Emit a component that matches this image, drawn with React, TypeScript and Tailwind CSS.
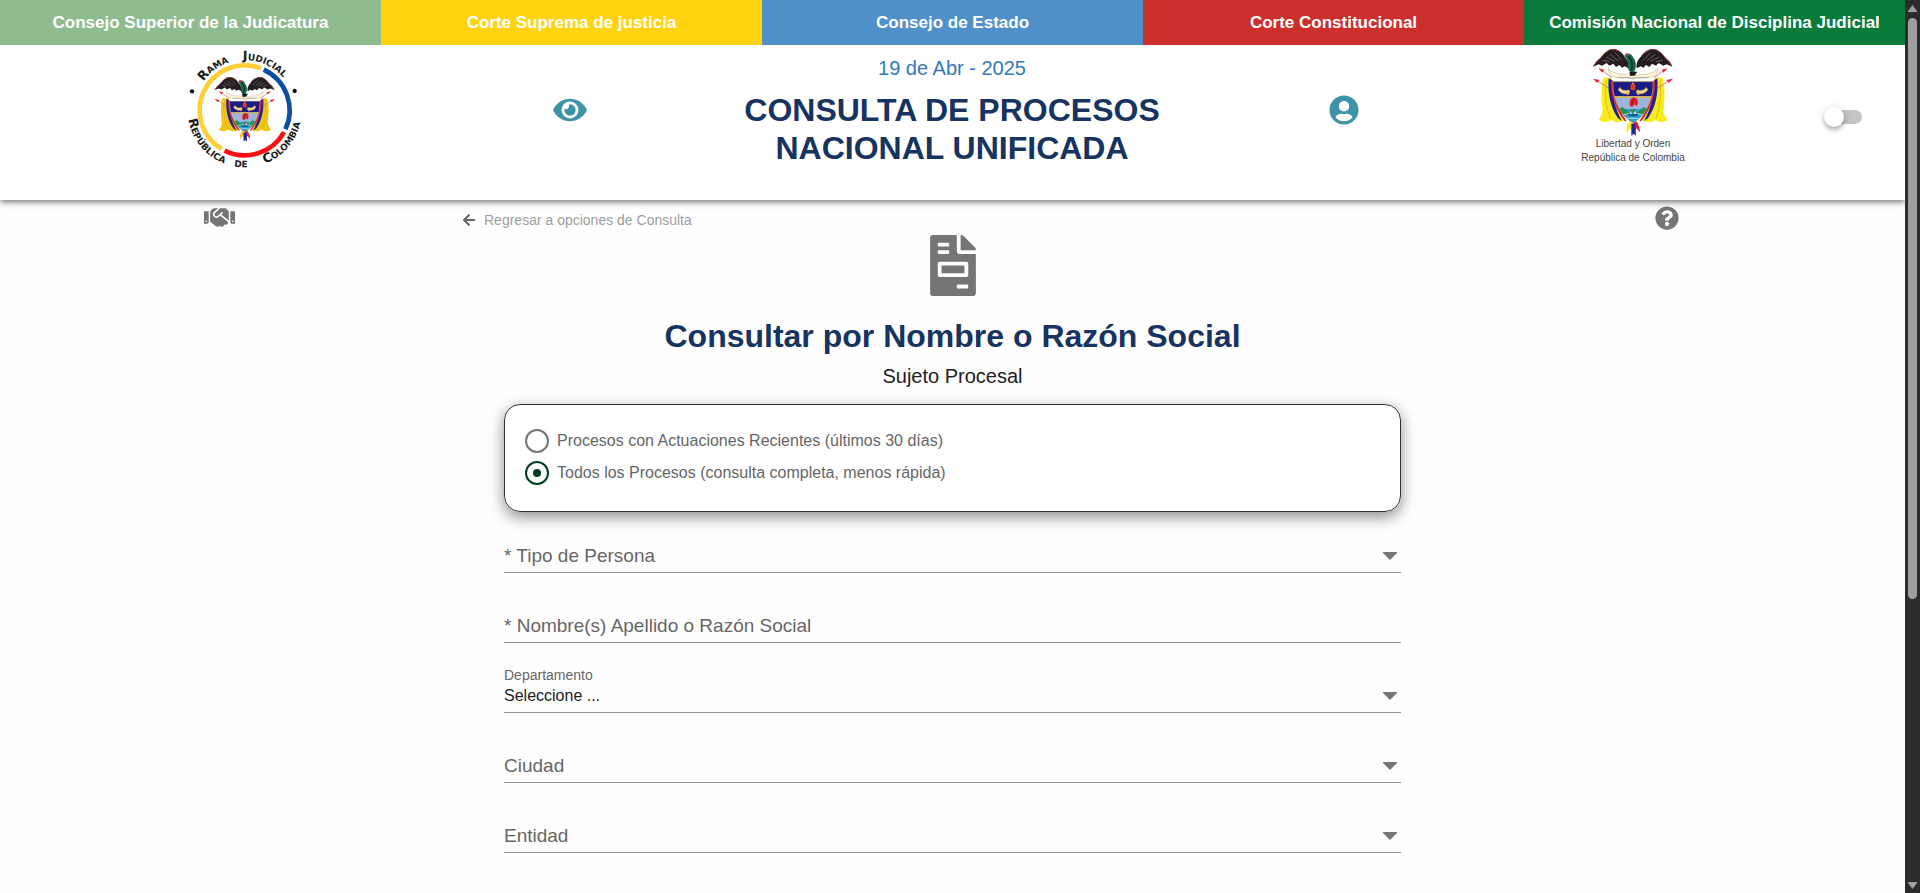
import { useState } from "react";
import type { ReactNode } from "react";
import {
  FaArrowLeft,
  FaEye,
  FaFileInvoice,
  FaHandshake,
  FaQuestionCircle,
  FaUserCircle,
} from "react-icons/fa";

const courts = [
  { name: "Consejo Superior de la Judicatura", tone: "bg-[#8fbc8f]" },
  { name: "Corte Suprema de justicia", tone: "bg-[#ffd310]" },
  { name: "Consejo de Estado", tone: "bg-[#4f90c9]" },
  { name: "Corte Constitucional", tone: "bg-[#cb302d]" },
  { name: "Comisión Nacional de Disciplina Judicial", tone: "bg-[#0a7b3a]" },
];

function CoatShapes({ gold }: { gold: string }) {
  return (
    <>
      {/* flags */}
      <path d="M134 110 C124 150 130 190 132 210 C130 222 125 230 120 237 C134 246 148 244 158 236 C168 246 186 244 198 238 C170 200 158 150 158 110Z" fill={gold} />
      <path d="M312 110 C322 150 316 190 314 210 C316 222 321 230 328 237 C312 246 300 244 290 236 C280 246 262 244 250 238 C278 200 290 150 288 110Z" fill={gold} />
      <path d="M143 118 C136 160 142 200 156 232 M303 118 C310 160 304 200 292 232" fill="none" stroke="#c9b400" strokeWidth="2" />
      <path d="M150 112 C146 158 156 200 178 232 L190 240 C168 200 160 160 161 118Z" fill="#20209a" />
      <path d="M296 112 C300 158 290 200 268 232 L256 240 C278 200 286 160 286 118Z" fill="#20209a" />
      <path d="M157 118 C155 162 170 206 198 240 L204 240 C178 204 165 160 165 122Z" fill="#d9202c" />
      <path d="M289 118 C291 162 276 206 248 240 L242 240 C268 204 281 160 281 122Z" fill="#d9202c" />
      {/* spear tips */}
      <path d="M119 82 L137 86 L132 95Z M103 113 L123 117 L116 126Z M327 82 L309 86 L314 95Z M343 113 L323 117 L330 126Z" fill="#ee2338" />
      <path d="M134 91 L160 110 M119 122 L148 140 M312 91 L286 110 M327 122 L298 140" stroke="#dd7f7f" strokeWidth="3" />
      {/* ribbon */}
      <path d="M150 82 C152 94 168 94 178 98 C190 104 204 96 212 104 L236 104 C246 96 258 104 268 98 C280 94 292 94 296 82 C300 102 280 112 262 110 L184 110 C166 112 146 102 150 82Z" fill="#fdf6de" stroke="#c5a668" strokeWidth="1.5" />
      <path d="M176 108 C190 114 204 106 222 114 C240 106 256 114 270 108" fill="none" stroke="#8a8a8a" strokeWidth="2" />
      {/* condor */}
      <path d="M103 77 L112 62 L126 50 L138 36 L152 26 L168 24 C184 28 192 36 198 48 C206 56 212 66 210 82 L198 76 L190 80 L182 72 L172 78 L164 68 L152 74 L144 66 L130 74 L120 70Z" fill="#241c1e" />
      <path d="M341 77 L334 62 L320 50 L308 36 L294 26 L278 24 C262 28 254 36 246 48 C238 56 232 66 234 82 L246 76 L254 80 L262 72 L272 78 L280 68 L292 74 L300 66 L314 74 L324 70Z" fill="#241c1e" />
      <path d="M104 75 L126 50 L140 35 L154 26 L170 26 L190 38" fill="none" stroke="#a8393b" strokeWidth="2.5" />
      <path d="M340 75 L320 50 L306 35 L292 26 L276 26 L256 38" fill="none" stroke="#a8393b" strokeWidth="2.5" />
      <path d="M132 58 L152 62 M142 48 L168 60 M154 40 L180 60 M168 34 L190 58 M312 58 L292 62 M302 48 L276 60 M290 40 L264 60 M276 34 L254 58" stroke="#7b8684" strokeWidth="2" />
      <path d="M197 44 C204 34 218 36 224 50 C234 62 234 78 226 94 C214 96 204 84 208 70 C208 58 204 52 197 44Z" fill="#166a4a" />
      <path d="M208 46 C220 54 224 70 218 90" fill="none" stroke="#0b2f23" strokeWidth="4" />
      <path d="M199 38 L210 36 L206 46Z" fill="#ef3a44" />
      <path d="M212 92 L236 92 L228 104 L214 104Z" fill="#1b1b1b" />
      {/* shield */}
      <path d="M163 122 H283 C285 172 268 214 223 246 C178 214 161 172 163 122Z" fill="#9db4dd" />
      <path d="M163 122 H283 C283 138 282 152 278 166 H168 C164 152 163 138 163 122Z" fill="#191c86" />
      <path d="M168 166 H278 L277 171 H169Z" fill="#d8b755" />
      <path d="M180 204 H266 C256 221 242 235 223 246 C204 235 190 221 180 204Z" fill="#2d9fd2" />
      <path d="M180 204 L192 198 L210 214 L223 204 L238 214 L254 198 L266 204 L250 224 L223 212 L196 224Z" fill="#24914e" />
      <path d="M192 222 L212 217 M204 232 L242 232 M234 217 L254 222" stroke="#a4e2f2" strokeWidth="3" />
      <path d="M212 218 L216 206 L221 218 M224 218 L229 204 L234 218" fill="#e9f4f2" stroke="#295f72" strokeWidth="2" />
      <path d="M207 219 H239 L234 226 H212Z" fill="#145c86" />
      <path d="M214 196 C210 178 218 166 229 170 C239 172 240 186 234 196 L228 190 L222 197Z" fill="#d92329" />
      <path d="M219 192 C220 182 224 176 230 174" fill="none" stroke="#7d1019" strokeWidth="2.5" />
      <path d="M223 124 L229 132 L223 138 L217 132Z" fill="#ffb330" />
      <ellipse cx="223" cy="138" rx="8" ry="10" fill="#d5421e" />
      <path d="M184 138 C188 148 198 150 212 146 L214 156 C198 164 184 156 178 146Z" fill="#f1d79b" stroke="#7b572b" strokeWidth="1.5" />
      <path d="M262 138 C258 148 248 150 234 146 L232 156 C248 164 262 156 268 146Z" fill="#f1d79b" stroke="#7b572b" strokeWidth="1.5" />
      <circle cx="207" cy="158" r="4" fill="#f2b023" />
      <circle cx="239" cy="158" r="4" fill="#f2b023" />
      <path d="M163 122 H283 C285 172 268 214 223 246 C178 214 161 172 163 122Z" fill="none" stroke="#b98a3d" strokeWidth="2" />
      {/* tassels */}
      <path d="M214 240 L223 248 L223 272 L213 262 L204 276 C202 262 206 248 214 240Z" fill={gold} />
      <path d="M232 240 L223 248 L225 272 L234 262 L244 274 C244 262 240 248 232 240Z" fill="#e2202c" />
      <path d="M218 248 H230 L232 284 L225 278 L218 284Z" fill="#2028a5" />
    </>
  );
}

function arc(from: number, to: number, r: number) {
  const at = (deg: number) => {
    const a = (deg * Math.PI) / 180;
    return `${(227 + r * Math.cos(a)).toFixed(2)} ${(211 - r * Math.sin(a)).toFixed(2)}`;
  };
  const large = Math.abs(to - from) > 180 ? 1 : 0;
  const sweep = to > from ? 0 : 1;
  return `M${at(from)} A${r} ${r} 0 ${large} ${sweep} ${at(to)}`;
}

const sealWords = [
  { word: "Rama", path: "#seal-top", at: "28.5%" },
  { word: "Judicial", path: "#seal-top", at: "64%" },
  { word: "República", path: "#seal-bottom", at: "24%" },
  { word: "de", path: "#seal-bottom", at: "48%" },
  { word: "Colombia", path: "#seal-bottom", at: "75%" },
];

function JudicialSeal() {
  return (
    <svg viewBox="45 30 360 360" className="h-[120px] w-[120px] overflow-visible" role="img" aria-label="Rama Judicial, República de Colombia">
      <path id="seal-top" d={arc(175, 5, 151)} fill="none" />
      <path id="seal-bottom" d={arc(172, 368, 171)} fill="none" />
      <path d={arc(69, 239.5, 135)} fill="none" stroke="#fdcf35" strokeWidth="14" />
      <path d={arc(243.5, 331, 135)} fill="none" stroke="#fb0f14" strokeWidth="14" />
      <path d={arc(335, 425, 135)} fill="none" stroke="#0a4da2" strokeWidth="14" />
      <circle cx="69" cy="154" r="6.5" fill="#111" />
      <circle cx="377" cy="153" r="6.5" fill="#111" />
      <g fill="#1a1a1a" fontFamily="'DejaVu Sans', sans-serif" fontWeight="700" fontSize="38" fontVariant="small-caps" textAnchor="middle">
        {sealWords.map((w) => (
          <text key={w.word}>
            <textPath href={w.path} startOffset={w.at}>
              {w.word}
            </textPath>
          </text>
        ))}
      </g>
      <g transform="translate(59 93) scale(0.755 0.745)">
        <CoatShapes gold="#f2c416" />
      </g>
    </svg>
  );
}

function NationalCoat() {
  return (
    <figure className="flex flex-col items-center">
      <svg viewBox="100 18 246 270" className="h-[90px] w-[82px]" role="img" aria-label="Escudo de Colombia">
        <CoatShapes gold="#f8ea1c" />
      </svg>
      <figcaption className="text-center text-[10px] leading-[14px] text-[#444]">
        Libertad y Orden
        <br />
        República de Colombia
      </figcaption>
    </figure>
  );
}

function Caret() {
  return (
    <svg viewBox="0 0 14 8" className="pointer-events-none mr-1 h-2 w-[14px] self-center justify-self-end [grid-area:1/1]" aria-hidden="true">
      <path d="M0 0H14V1L7 8L0 1Z" fill="#757575" />
    </svg>
  );
}

function Field({ id, label, caret, children }: { id: string; label: string; caret?: boolean; children: ReactNode }) {
  return (
    <div className="mt-[37px] grid h-[33px] items-center border-b border-[#949494]">
      <label htmlFor={id} className="pointer-events-none z-10 text-[19px] leading-6 text-[#666] [grid-area:1/1]">
        {label}
      </label>
      {children}
      {caret && <Caret />}
    </div>
  );
}

const control = "h-8 w-full appearance-none bg-transparent text-base outline-none [grid-area:1/1]";

export default function App() {
  const [scope, setScope] = useState("todos");
  const [dark, setDark] = useState(false);

  const scopes = [
    { value: "recientes", text: "Procesos con Actuaciones Recientes (últimos 30 días)" },
    { value: "todos", text: "Todos los Procesos (consulta completa, menos rápida)" },
  ];

  return (
    <div className="flex min-h-screen bg-[#fefefe] font-['Liberation_Sans',Arial,sans-serif] text-[#212121]">
      <div className="min-w-0 flex-1">
        <nav className="grid grid-cols-5">
          {courts.map((court) => (
            <a
              key={court.name}
              href="#"
              className={`flex h-[45px] items-center justify-center text-[17px] font-bold whitespace-nowrap text-white ${court.tone}`}
            >
              {court.name}
            </a>
          ))}
        </nav>

        <header className="grid h-[155px] grid-cols-[488fr_164fr_600fr_184fr_374fr_95fr] bg-white shadow-[0_2px_4px_-1px_rgba(0,0,0,0.3),0_4px_5px_0_rgba(0,0,0,0.2),0_1px_10px_0_rgba(0,0,0,0.12)]">
          <div className="flex justify-center pt-[5px]">
            <JudicialSeal />
          </div>
          <div className="flex h-[130px] items-center justify-center">
            <button type="button" aria-label="Accesibilidad">
              <FaEye className="h-[30px] w-[34px] text-[#3d93a8]" />
            </button>
          </div>
          <div className="pt-2 text-center">
            <p className="text-xl leading-[30px] text-[#337ab7]">19 de Abr - 2025</p>
            <h1 className="pt-2 text-[32px] leading-[38px] font-bold text-[#17335f]">
              CONSULTA DE PROCESOS
              <br />
              NACIONAL UNIFICADA
            </h1>
          </div>
          <div className="flex h-[130px] items-center justify-center">
            <button type="button" aria-label="Cuenta">
              <FaUserCircle className="h-[30px] w-[30px] text-[#3d93a8]" />
            </button>
          </div>
          <div className="flex justify-center pt-[2px] pl-5">
            <NationalCoat />
          </div>
          <label className="flex h-[144px] cursor-pointer items-center pl-[14px]">
            <input
              type="checkbox"
              role="switch"
              aria-label="Modo oscuro"
              checked={dark}
              onChange={(e) => setDark(e.target.checked)}
              className="peer sr-only"
            />
            <span className="z-10 h-5 w-5 rounded-full bg-white shadow-[0_2px_4px_-1px_rgba(0,0,0,0.2),0_4px_5px_0_rgba(0,0,0,0.14),0_1px_10px_0_rgba(0,0,0,0.12)] peer-checked:translate-x-5" />
            <span className="-ml-[14px] h-[14px] w-8 rounded-full bg-[#c4c4c4]" />
          </label>
        </header>

        <main className="grid grid-cols-[438fr_1029fr_438fr]">
          <div className="flex items-start justify-center pt-[5px]">
            <button type="button" aria-label="Acuerdos">
              <FaHandshake className="h-[25px] w-[31px] text-[#757575]" />
            </button>
          </div>

          <section className="flex flex-col items-center pb-10">
            <a href="#" className="flex items-center gap-2 self-start pt-2 pl-6 text-sm leading-6 text-[#9e9e9e]">
              <FaArrowLeft className="h-[14px] w-[14px] text-[#666]" />
              Regresar a opciones de Consulta
            </a>
            <FaFileInvoice className="mt-[3px] h-[61px] w-[46px] text-[#757575]" />
            <h2 className="mt-5 text-[32px] leading-10 font-bold text-[#17335f]">Consultar por Nombre o Razón Social</h2>
            <p className="mt-1 text-xl leading-8">Sujeto Procesal</p>

            <form className="w-full max-w-[897px] pt-3">
              <fieldset className="rounded-2xl border border-[#333] bg-white px-5 pt-5 pb-[22px] shadow-[0_5px_15px_rgba(0,0,0,0.45)]">
                {scopes.map((s) => (
                  <label key={s.value} className="flex h-8 cursor-pointer items-center gap-2 text-base text-[#666]">
                    <input
                      type="radio"
                      name="alcance"
                      value={s.value}
                      checked={scope === s.value}
                      onChange={() => setScope(s.value)}
                      className="grid h-6 w-6 appearance-none place-items-center rounded-full border-2 border-[#757575] before:h-2 before:w-2 before:rounded-full checked:border-[#003d20] checked:before:bg-[#003d20]"
                    />
                    {s.text}
                  </label>
                ))}
              </fieldset>

              <div className="-mt-[9px]">
                <Field id="tipo" label="* Tipo de Persona" caret>
                  <select id="tipo" className={control} />
                </Field>
                <Field id="nombre" label="* Nombre(s) Apellido o Razón Social">
                  <input id="nombre" type="text" className={control} />
                </Field>
                <div className="mt-[22px] grid h-12 grid-rows-[20px_1fr] border-b border-[#949494]">
                  <label htmlFor="departamento" className="text-sm leading-5 text-[#666]">
                    Departamento
                  </label>
                  <div className="grid pb-[5px]">
                    <select id="departamento" className="h-[22px] w-full appearance-none bg-transparent text-base leading-5 outline-none [grid-area:1/1]">
                      <option>Seleccione ...</option>
                    </select>
                    <Caret />
                  </div>
                </div>
                <Field id="ciudad" label="Ciudad" caret>
                  <select id="ciudad" className={control} />
                </Field>
                <Field id="entidad" label="Entidad" caret>
                  <select id="entidad" className={control} />
                </Field>
              </div>
            </form>
          </section>

          <div className="flex items-start justify-center pt-[6px] pr-[38px]">
            <button type="button" aria-label="Ayuda">
              <FaQuestionCircle className="h-6 w-6 text-[#757575]" />
            </button>
          </div>
        </main>
      </div>

      <div className="flex w-[15px] flex-col items-center bg-[#2c2c2c] pt-[5px] pb-1" aria-hidden="true">
        <svg viewBox="0 0 9 7" className="h-[7px] w-[9px]">
          <path d="M4.5 0L9 6V7H0V6Z" fill="#9f9f9f" />
        </svg>
        <div className="mt-[6px] mb-[283px] w-[9px] flex-1 rounded-full bg-[#9f9f9f]" />
        <svg viewBox="0 0 9 7" className="h-[7px] w-[9px]">
          <path d="M4.5 7L9 1V0H0V1Z" fill="#9f9f9f" />
        </svg>
      </div>
    </div>
  );
}
